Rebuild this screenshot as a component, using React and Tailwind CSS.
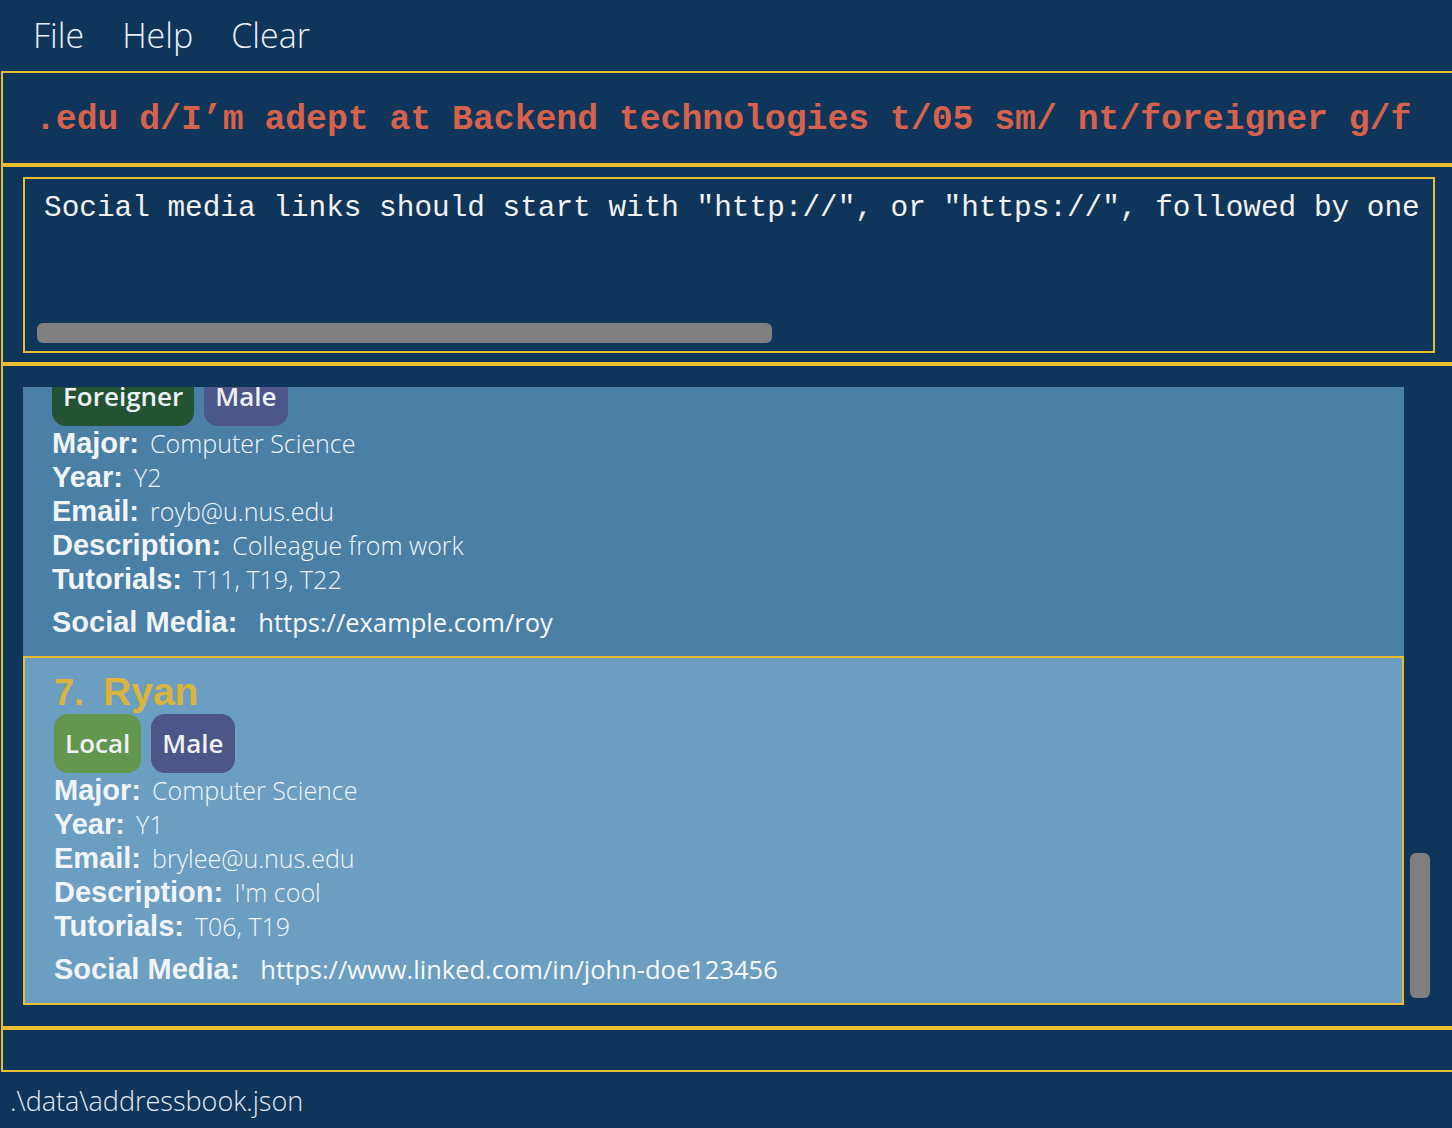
import React from 'react';

const navy = 'bg-[#10355b]';

const students = [
  {
    id: 6,
    name: 'Roy',
    tags: [
      { label: 'Foreigner', color: 'bg-[#245334]' },
      { label: 'Male', color: 'bg-[#4c5689]' },
    ],
    major: 'Computer Science',
    year: 'Y2',
    email: 'royb@u.nus.edu',
    description: 'Colleague from work',
    tutorials: 'T11, T19, T22',
    social: 'https://example.com/roy',
    selected: false,
  },
  {
    id: 7,
    name: 'Ryan',
    tags: [
      { label: 'Local', color: 'bg-[#63974f]' },
      { label: 'Male', color: 'bg-[#4c5689]' },
    ],
    major: 'Computer Science',
    year: 'Y1',
    email: 'brylee@u.nus.edu',
    description: "I'm cool",
    tutorials: 'T06, T19',
    social: 'https://www.linked.com/in/john-doe123456',
    selected: true,
  },
];

const labelFont = "font-['Liberation_Sans',Arial,sans-serif] font-bold text-[29px] text-[#f1f5f9]";
const valueFont = "font-['Open_Sans',sans-serif] font-light text-[25px] text-[#f3f6f9]";

const Field = ({ label, value }) => (
  <div className="flex items-baseline h-[34px] leading-[34px] whitespace-nowrap">
    <span className={labelFont}>{label}</span>
    <span className={`${valueFont} ml-[11px]`}>{value}</span>
  </div>
);

const StudentCard = ({ s }) => (
  <div
    className={`h-[349px] shrink-0 pl-[29px] ${
      s.selected ? 'bg-[#6b9ec0] border-2 border-[#e9bd30] pt-[13px]' : 'bg-[#4a80a6] pt-[17px]'
    }`}
  >
    <div className="flex items-baseline h-[41px] leading-[41px] font-['Liberation_Sans',Arial,sans-serif] font-bold text-[36px] text-[#dab43b]">
      <span>{s.id}.</span>
      <span className="ml-[19px] text-[39px]">{s.name}</span>
    </div>
    <div className="flex gap-[10px] mt-[2px]">
      {s.tags.map((t) => (
        <span
          key={t.label}
          className={`${t.color} h-[59px] px-[11px] rounded-[14px] flex items-center font-['Open_Sans',sans-serif] font-semibold text-[26px] text-[#eef2f6]`}
        >
          {t.label}
        </span>
      ))}
    </div>
    <Field label="Major:" value={s.major} />
    <Field label="Year:" value={s.year} />
    <Field label="Email:" value={s.email} />
    <Field label="Description:" value={s.description} />
    <Field label="Tutorials:" value={s.tutorials} />
    <div className="flex items-baseline h-[34px] leading-[34px] mt-[9px] whitespace-nowrap">
      <span className={labelFont}>Social Media:</span>
      <span className="ml-[21px] font-['Open_Sans',sans-serif] text-[25.5px] text-[#f7f9fb]">{s.social}</span>
    </div>
  </div>
);

const App = () => {
  return (
    <div className={`w-[1452px] h-[1128px] ${navy} overflow-hidden flex flex-col pl-[1px]`}>
      {/* menu bar */}
      <div className="h-[71px] shrink-0 flex items-center pl-[32px] gap-[38px] font-['Open_Sans',sans-serif] font-light text-[34px] text-[#e9eff5]">
        <span>File</span>
        <span>Help</span>
        <span>Clear</span>
      </div>

      {/* command box */}
      <div className="h-[94px] shrink-0 border-t-2 border-b-2 border-l-2 border-[#e9bd30] flex items-center pl-[32px] pt-[4px] overflow-hidden">
        <span className="whitespace-pre font-['Liberation_Mono','Courier_New',monospace] font-bold text-[34.75px] text-[#d7624c]">
          .edu d/I’m adept at Backend technologies t/05 sm/ nt/foreigner g/f
        </span>
      </div>

      {/* result display */}
      <div className="h-[199px] shrink-0 border-t-2 border-b-2 border-l-2 border-[#e9bd30] pt-[10px] pl-[20px]">
        <div className="w-[1412px] h-[176px] border-2 border-[#e9bd30] flex flex-col overflow-hidden">
          <div className="pt-[13px] pl-[19px] whitespace-pre leading-[34px] font-['Liberation_Mono','Courier_New',monospace] text-[29.4px] text-[#f2f2f2]">
            Social media links should start with "http://", or "https://", followed by one
          </div>
          <div className="mt-auto mb-[8px] ml-[12px] w-[735px] h-[20px] rounded-[6px] bg-[#808080]" />
        </div>
      </div>

      {/* person list */}
      <div className="h-[664px] shrink-0 border-t-2 border-b-2 border-l-2 border-[#e9bd30] pt-[21px] pl-[20px] flex">
        <div className="w-[1381px] h-[618px] overflow-hidden">
          <div className="flex flex-col -mt-[80px]">
            {students.map((s) => (
              <StudentCard key={s.id} s={s} />
            ))}
          </div>
        </div>
        <div className="ml-[6px] w-[20px]">
          <div className="mt-[466px] h-[145px] w-[20px] rounded-[6px] bg-[#808080]" />
        </div>
      </div>

      {/* status bar */}
      <div className="h-[44px] shrink-0 border-t-2 border-b-2 border-l-2 border-[#e9bd30]" />

      {/* footer */}
      <div className="flex-1 flex items-center pl-[9px] pt-[3px] font-['Open_Sans',sans-serif] font-light text-[27px] text-[#e4ebf2]">
        .\data\addressbook.json
      </div>
    </div>
  );
};

export default App;
